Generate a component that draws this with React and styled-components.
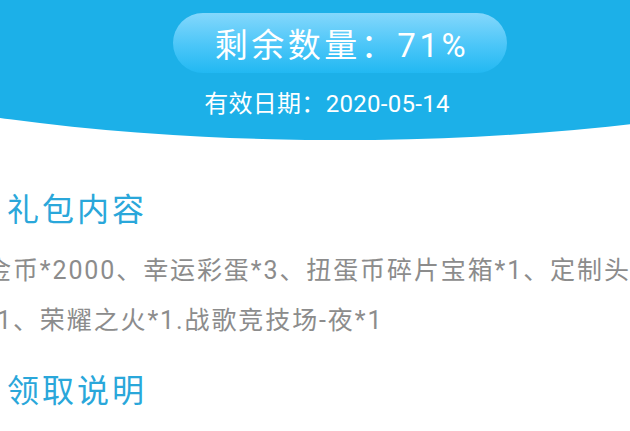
import React from "react";
import styled, { createGlobalStyle } from "styled-components";

const GlobalStyle = createGlobalStyle`
    html, body {
        margin: 0;
        padding: 0;
        background: #fff;
    }
    body {
        font-family: Roboto, "Noto Sans CJK SC", sans-serif;
        overflow: hidden;
    }
`

const Page = styled.div`
    width: 630px;
    height: 431px;
    overflow: hidden;
    background: #fff;
`

const Header = styled.div`
    height: 140px;
    background: #1cb0e8;
    clip-path: ellipse(700px 175px at 340px -35px);
    display: flex;
    flex-direction: column;
    align-items: center;
    padding-left: 50px;
    box-sizing: border-box;
`

const Pill = styled.div`
    margin-top: 13px;
    width: 334px;
    height: 60px;
    border-radius: 30px;
    background: linear-gradient(180deg, #84d7fc 0%, #4ac6f8 55%, #22b8f2 100%);
    display: flex;
    align-items: center;
    justify-content: center;
    color: #fff;
    font-size: 33px;
    letter-spacing: 3.5px;
    padding-left: 4px;
    box-sizing: border-box;
`

const DateText = styled.div`
    margin: 16px 26px 0 0;
    color: #fff;
    font-size: 24px;
    line-height: 30px;
    letter-spacing: 0.3px;
`

const Content = styled.div`
    padding-left: 7px;
    display: flex;
    flex-direction: column;
`

const Title = styled.h2`
    margin: ${p => p.$top}px 0 0 0;
    font-weight: 400;
    font-size: 32px;
    line-height: 40px;
    letter-spacing: 3px;
    color: #2aa7da;
`

const Body = styled.div`
    margin: 16px 0 0 -7px;
    color: #8c8c8c;
    font-size: 25px;
    letter-spacing: 1.9px;
    line-height: 50px;
    white-space: nowrap;
`

const Line = styled.div`
    margin-left: ${p => p.$x}px;
`

export default function App(){
    return(
        <Page>
            <GlobalStyle/>
            <Header>
                <Pill>剩余数量：71%</Pill>
                <DateText>有效日期：2020-05-14</DateText>
            </Header>
            <Content>
                <Title $top={50}>礼包内容</Title>
                <Body>
                    <Line $x={-14}>金币*2000、幸运彩蛋*3、扭蛋币碎片宝箱*1、定制头</Line>
                    <Line $x={-3}>1、荣耀之火*1.战歌竞技场-夜*1</Line>
                </Body>
                <Title $top={25}>领取说明</Title>
            </Content>
        </Page>
    )
}
